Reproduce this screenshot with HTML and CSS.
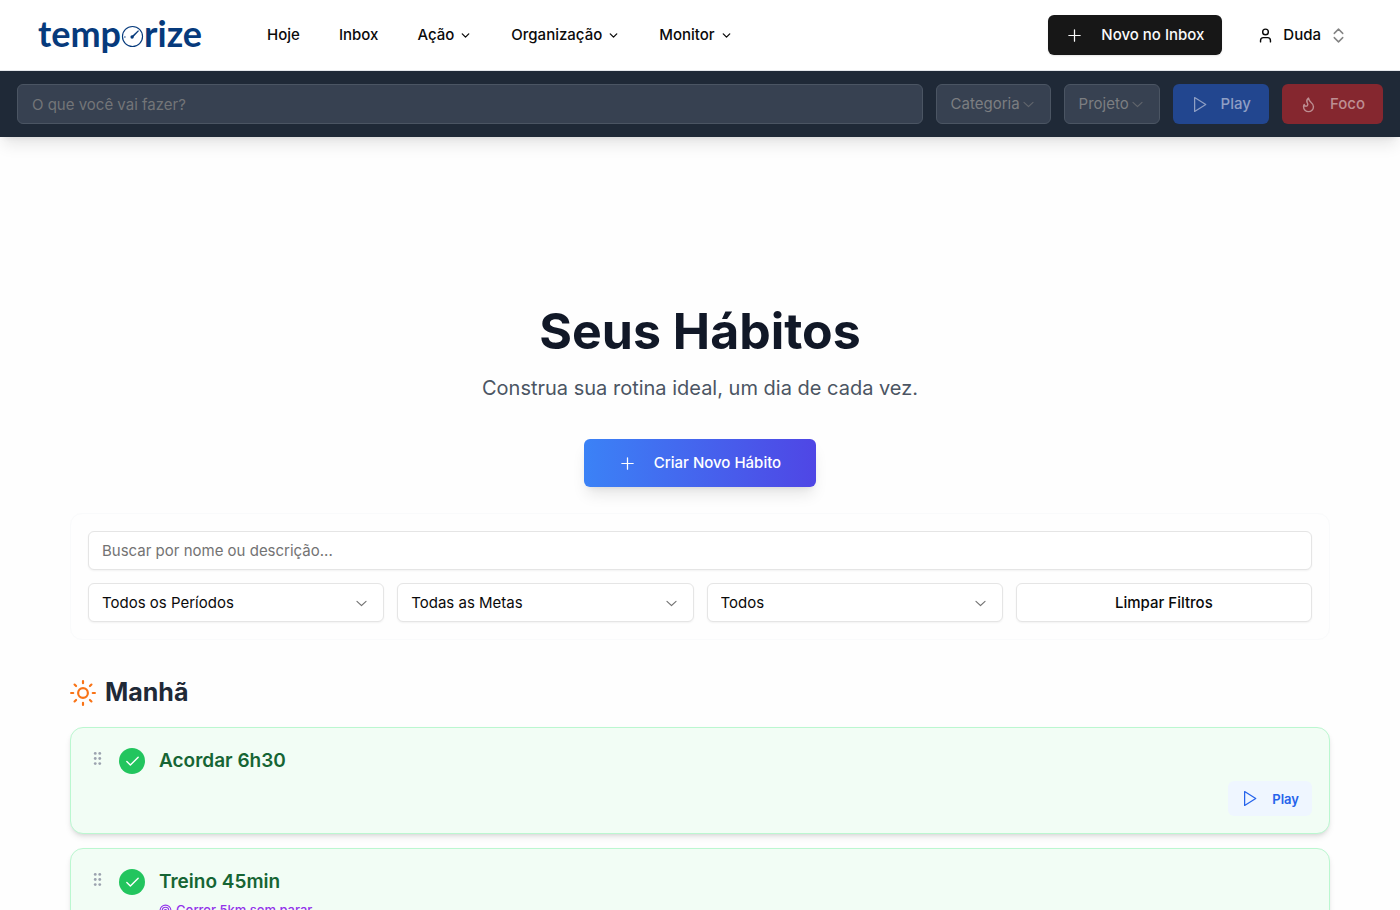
FILE: index.html
```html
<!DOCTYPE html>
<html lang="pt-BR">
<head>
<meta charset="utf-8">
<meta name="viewport" content="width=device-width, initial-scale=1">
<title>Temporize - Hábitos</title>
<link rel="stylesheet" href="styles.css">
</head>
<body>
<svg class="sprite" aria-hidden="true">
  <symbol id="chevron" viewBox="0 0 15 15"><path fill="currentColor" fill-rule="evenodd" d="M3.135 6.158a.5.5 0 0 1 .707-.023L7.5 9.565l3.658-3.43a.5.5 0 0 1 .684.73l-4 3.75a.5.5 0 0 1-.684 0l-4-3.75a.5.5 0 0 1-.023-.707Z"/></symbol>
  <symbol id="chevron-round" viewBox="0 0 24 24"><path fill="none" stroke="currentColor" stroke-width="2.4" stroke-linecap="round" stroke-linejoin="round" d="m6 9 6 6 6-6"/></symbol>
  <symbol id="plus" viewBox="0 0 15 15"><path fill="none" stroke="currentColor" stroke-width="1.1" stroke-linecap="round" d="M7.500 2.500v10M2.500 7.500h10"/></symbol>
  <symbol id="play" viewBox="0 0 15 15"><path fill="none" stroke="currentColor" stroke-width="1.1" stroke-linejoin="round" d="M3.200 1.400v12.200L13 7.500Z"/></symbol>
  <symbol id="check" viewBox="0 0 24 24"><path fill="none" stroke="currentColor" stroke-width="2" stroke-linecap="round" stroke-linejoin="round" d="M20 6 9 17l-5-5"/></symbol>
  <symbol id="dots" viewBox="0 0 15 15"><g fill="currentColor"><circle cx="5.500" cy="3" r="1.250"/><circle cx="9.500" cy="3" r="1.250"/><circle cx="5.500" cy="7.500" r="1.250"/><circle cx="9.500" cy="7.500" r="1.250"/><circle cx="5.500" cy="12" r="1.250"/><circle cx="9.500" cy="12" r="1.250"/></g></symbol>
</svg>

<header class="topbar">
  <a class="logo" href="#" aria-label="temporize"><span>temp</span><svg class="logo-dial" viewBox="0 0 22 22" aria-hidden="true"><circle cx="11" cy="11" r="9.600" fill="none" stroke="currentColor" stroke-width="1.100"/><path d="M10.200 10.800 16.400 5l.8.700-5.800 6.300Z" fill="currentColor"/><circle cx="10.600" cy="11.500" r="1.600" fill="currentColor"/><path d="M3 11.500h1.400" stroke="currentColor"/></svg><span>rize</span></a>
  <nav class="nav" aria-label="Principal">
    <a href="#">Hoje</a>
    <a href="#">Inbox</a>
    <button type="button">Ação<svg class="icon-xs"><use href="#chevron-round"/></svg></button>
    <button type="button">Organização<svg class="icon-xs"><use href="#chevron-round"/></svg></button>
    <button type="button">Monitor<svg class="icon-xs"><use href="#chevron-round"/></svg></button>
  </nav>
  <button type="button" class="btn btn-dark"><svg class="icon"><use href="#plus"/></svg>Novo no Inbox</button>
  <button type="button" class="user">
    <svg class="icon" viewBox="0 0 24 24" fill="none" stroke="currentColor" stroke-width="2" stroke-linecap="round" stroke-linejoin="round"><path d="M19 21v-2a4 4 0 0 0-4-4H9a4 4 0 0 0-4 4v2"/><circle cx="12" cy="7" r="4"/></svg>
    Duda
    <svg class="icon muted" viewBox="0 0 24 24" fill="none" stroke="currentColor" stroke-width="2" stroke-linecap="round" stroke-linejoin="round"><path d="m6 9 6-6 6 6M6 15l6 6 6-6"/></svg>
  </button>
</header>

<form class="tracker" aria-label="Cronômetro">
  <input class="tracker-field tracker-input" type="text" placeholder="O que você vai fazer?" aria-label="O que você vai fazer?" disabled>
  <div class="select-wrap compact">
    <select class="tracker-field" aria-label="Categoria" disabled><option>Categoria</option></select>
    <svg class="icon"><use href="#chevron"/></svg>
  </div>
  <div class="select-wrap compact">
    <select class="tracker-field" aria-label="Projeto" disabled><option>Projeto</option></select>
    <svg class="icon"><use href="#chevron"/></svg>
  </div>
  <button type="button" class="btn btn-play" disabled><svg class="icon"><use href="#play"/></svg>Play</button>
  <button type="button" class="btn btn-focus" disabled><svg class="icon" viewBox="0 0 24 24" fill="none" stroke="currentColor" stroke-width="2" stroke-linecap="round" stroke-linejoin="round"><path d="M8.500 14.500A2.500 2.500 0 0 0 11 12c0-1.380-.5-2-1-3-1.072-2.143-.224-4.054 2-6 .5 2.500 2 4.900 4 6.500 2 1.600 3 3.500 3 5.500a7 7 0 1 1-14 0c0-1.153.433-2.294 1-3a2.500 2.500 0 0 0 2.500 2.500z"/></svg>Foco</button>
</form>

<main class="page">
  <section class="hero">
    <h1>Seus Hábitos</h1>
    <p>Construa sua rotina ideal, um dia de cada vez.</p>
    <button type="button" class="btn btn-create"><svg class="icon"><use href="#plus"/></svg>Criar Novo Hábito</button>
  </section>

  <form class="filters" aria-label="Filtros">
    <input class="field" type="search" placeholder="Buscar por nome ou descrição..." aria-label="Buscar por nome ou descrição">
    <div class="filter-row">
      <div class="select-wrap">
        <select class="field" aria-label="Período"><option>Todos os Períodos</option></select>
        <svg class="icon"><use href="#chevron"/></svg>
      </div>
      <div class="select-wrap">
        <select class="field" aria-label="Meta"><option>Todas as Metas</option></select>
        <svg class="icon"><use href="#chevron"/></svg>
      </div>
      <div class="select-wrap">
        <select class="field" aria-label="Status"><option>Todos</option></select>
        <svg class="icon"><use href="#chevron"/></svg>
      </div>
      <button type="reset" class="field field-button">Limpar Filtros</button>
    </div>
  </form>

  <section class="period">
    <h2><svg class="sun" viewBox="0 0 24 24" fill="none" stroke="currentColor" stroke-width="2" stroke-linecap="round" aria-hidden="true"><circle cx="12" cy="12" r="4.500"/><path d="M12 1v2M12 21v2M4.200 4.200l1.400 1.400M18.400 18.400l1.400 1.400M1 12h2M21 12h2M5.600 18.400l-1.400 1.400M19.800 4.200l-1.400 1.400"/></svg>Manhã</h2>
    <article class="habit">
      <div class="habit-head">
        <button type="button" class="handle" aria-label="Reordenar"><svg class="icon"><use href="#dots"/></svg></button>
        <button type="button" class="done" aria-label="Concluído"><svg class="icon"><use href="#check"/></svg></button>
        <div class="habit-info"><h3>Acordar 6h30</h3></div>
      </div>
      <button type="button" class="btn btn-soft"><svg class="icon"><use href="#play"/></svg>Play</button>
    </article>
    <article class="habit">
      <div class="habit-head">
        <button type="button" class="handle" aria-label="Reordenar"><svg class="icon"><use href="#dots"/></svg></button>
        <button type="button" class="done" aria-label="Concluído"><svg class="icon"><use href="#check"/></svg></button>
        <div class="habit-info">
          <h3>Treino 45min</h3>
          <p class="goal"><svg class="icon-xs" viewBox="0 0 24 24" fill="none" stroke="currentColor" stroke-width="2"><circle cx="12" cy="12" r="10"/><circle cx="12" cy="12" r="6"/><circle cx="12" cy="12" r="2"/></svg>Correr 5km sem parar</p>
        </div>
      </div>
    </article>
  </section>
</main>
</body>
</html>
```
FILE: styles.css
```css
* { box-sizing: border-box; }

body {
  margin: 0;
  height: 100vh;
  overflow: hidden;
  background: #fefefe;
  color: #0a0a0a;
  font: 400 15px/22px Inter, "Liberation Sans", sans-serif;
}

h1, h2, h3, p { margin: 0; }
a { color: inherit; text-decoration: none; }
button, input, select { font: inherit; color: inherit; }
button { border: 0; background: none; padding: 0; }

.sprite { position: absolute; width: 0; height: 0; }
.icon { width: 17px; height: 17px; flex: none; }
.icon-xs { width: 13px; height: 13px; flex: none; }
.muted { opacity: 0.5; }

.topbar {
  display: flex;
  align-items: center;
  height: 71px;
  padding: 0 53px 0 38px;
  background: #fff;
  border-bottom: 1px solid #e5e7eb;
}

.logo {
  display: flex;
  align-items: center;
  padding-bottom: 4px;
  color: #063a7c;
  font: 700 36px/40px Lato, sans-serif;
}
.logo-dial { width: 23px; height: 23px; margin-top: 6px; }

.nav {
  display: flex;
  gap: 39px;
  flex: 1;
  margin-left: 65px;
  font-weight: 500;
}
.nav button { display: flex; align-items: center; gap: 5px; font-weight: 500; }

.btn {
  display: flex;
  align-items: center;
  justify-content: center;
  gap: 18px;
  height: 40px;
  padding: 0 18px;
  border-radius: 6px;
  font-weight: 500;
  white-space: nowrap;
}
.btn-dark { background: #171717; color: #fafafa; box-shadow: 0 1px 2px rgb(0 0 0 / 10%); }

.user {
  display: flex;
  align-items: center;
  gap: 9px;
  margin-left: 35px;
  font-weight: 500;
}

.tracker {
  display: flex;
  gap: 13px;
  padding: 13px 17px;
  background: #1f2937;
  box-shadow: 0 10px 15px -3px rgb(0 0 0 / 10%), 0 4px 6px -4px rgb(0 0 0 / 10%);
}
.tracker-field {
  height: 40px;
  padding: 0 14px;
  border: 1px solid #4b5563;
  border-radius: 6px;
  background: #374151;
  color: #7c7e81;
  opacity: 1;
}
.tracker-input { flex: 1; min-width: 0; }
.tracker-input::placeholder { color: #737578; }
.tracker .btn { gap: 13px; }
.btn-play { background: #22468f; color: #8f9fc4; }
.btn-focus { background: #85272f; color: #bd8e92; }

.select-wrap { position: relative; display: flex; }
.select-wrap select { appearance: none; width: 100%; }
.select-wrap .icon {
  position: absolute;
  right: 14px;
  top: 11px;
  color: #737373;
  pointer-events: none;
}
.compact select { padding-right: 29px; }
.compact .icon { color: #61656c; }

.page { padding: 166px 70px 0; }

.hero {
  display: flex;
  flex-direction: column;
  align-items: center;
}
.hero h1 { color: #111827; font-size: 50px; line-height: 56px; font-weight: 700; }
.hero p { margin-top: 13px; color: #4b5563; font-size: 20px; line-height: 32px; }
.btn-create {
  height: 48px;
  margin-top: 35px;
  padding: 0 35px;
  background: linear-gradient(90deg, #3b82f6, #4f46e5);
  color: #fff;
  box-shadow: 0 10px 15px -3px rgb(0 0 0 / 10%), 0 4px 6px -4px rgb(0 0 0 / 10%);
}

.filters {
  display: grid;
  gap: 13px;
  margin-top: 26px;
  padding: 17px;
  border: 1px solid #f9fafb;
  border-radius: 12px;
}
.filter-row { display: grid; grid-template-columns: repeat(4, 1fr); gap: 13px; }
.field {
  width: 100%;
  height: 39px;
  padding: 0 13px;
  border: 1px solid #e5e5e5;
  border-radius: 6px;
  background: #fff;
  box-shadow: 0 1px 2px rgb(0 0 0 / 5%);
}
.field::placeholder { color: #737373; }
.field-button { font-weight: 500; }

.period { margin-top: 35px; }
.period h2 {
  display: flex;
  align-items: center;
  gap: 9px;
  color: #1f2937;
  font-size: 25px;
  line-height: 35px;
  font-weight: 700;
}
.sun { width: 26px; height: 26px; color: #f97316; }

.habit {
  margin-top: 14px;
  padding: 17px;
  min-height: 107px;
  border: 1px solid #bbf7d0;
  border-radius: 13px;
  background: #f2fdf5;
  box-shadow: 0 4px 6px -1px rgb(0 0 0 / 10%), 0 2px 4px -2px rgb(0 0 0 / 10%);
}
.period h2 + .habit { margin-top: 17px; }
.habit-head { display: flex; align-items: flex-start; }
.handle { display: flex; margin: 5px 13px 0 0; color: #9ca3af; padding-left: 1px; }
.done {
  display: flex;
  align-items: center;
  justify-content: center;
  width: 26px;
  height: 26px;
  margin: 3px 14px 0 0;
  border-radius: 50%;
  background: #22c55e;
  color: #fff;
}
.habit h3 { color: #166534; font-size: 19px; line-height: 31px; font-weight: 600; }
.goal {
  display: flex;
  align-items: center;
  gap: 4px;
  margin-top: 4px;
  color: #9333ea;
  font-size: 13px;
  line-height: 18px;
  font-weight: 500;
}
.btn-soft {
  height: 35px;
  margin: 5px 0 0 auto;
  padding: 0 13px;
  gap: 14px;
  background: #eff6ff;
  color: #2563eb;
  font-size: 13px;
  font-weight: 600;
}
```
